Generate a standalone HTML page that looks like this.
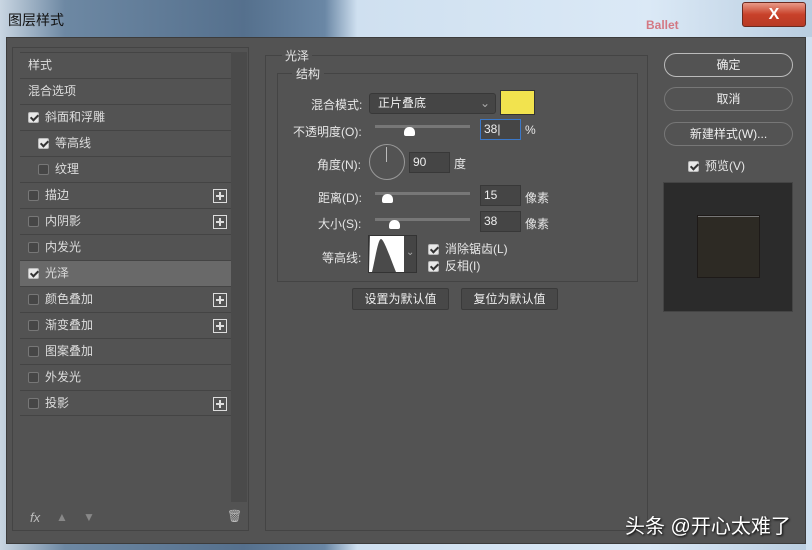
<!DOCTYPE html>
<html><head><meta charset="utf-8"><style>
*{margin:0;padding:0;box-sizing:border-box}
body{width:812px;height:550px;overflow:hidden;font-family:"Liberation Sans","Noto Sans CJK SC",sans-serif;font-size:12px;color:#e6e6e6;position:relative;background:#6f8aa6}
.a{position:absolute}
#title{left:0;top:0;width:812px;height:550px;background:linear-gradient(90deg,#c9d6e2 0%,#6d88a3 8%,#55708d 30%,#6a87a5 40%,#cfe0f0 44%,#dbe9f6 80%,#b9cde0 100%)}
#dlg{left:6px;top:37px;width:800px;height:507px;background:#535353;border:1px solid #3c3c3c}
.t{position:absolute;white-space:nowrap}
.row{position:absolute;left:20px;width:211px;height:26px;border-top:1px solid #444;line-height:25px;padding-left:8px;color:#ddd;font-size:12px}
.cb{display:inline-block;width:11px;height:11px;border:1px solid #777;border-radius:2px;background:#464646;vertical-align:-2px;margin-right:6px}
.cb.on{background:#e8e8e8;border-color:#bbb;position:relative}
.cb.on:after{content:"";position:absolute;left:3px;top:0px;width:3px;height:6px;border:solid #333;border-width:0 2px 2px 0;transform:rotate(45deg)}
.plus{position:absolute;right:4px;top:6px;width:14px;height:14px;border:1px solid #ddd}
.plus:before{content:"";position:absolute;left:2px;top:5px;width:8px;height:2px;background:#ddd}
.plus:after{content:"";position:absolute;left:5px;top:2px;width:2px;height:8px;background:#ddd}
.inp{position:absolute;background:#454545;border:1px solid #383838;height:21px;line-height:19px;padding-left:3px;color:#eee}
.track{position:absolute;height:3px;background:#777;width:95px;left:375px}
.thumb{position:absolute;width:11px;height:9px;background:#fff;border-radius:5px 5px 2px 2px}
.btn{position:absolute;border:1px solid #777;border-radius:12px;text-align:center;color:#eee;height:24px;line-height:22px}
.sb{position:absolute;background:#484848;border:1px solid #3a3a3a;height:22px;line-height:20px;text-align:center;color:#eee;border-radius:2px}
</style></head><body>
<div class="a" id="title"></div>
<div class="t" style="left:8px;top:10px;font-size:14px;color:#111">图层样式</div>
<div class="a" style="left:646px;top:18px;color:#d24a55;font-weight:bold;font-size:12px;opacity:.7">Ballet</div>
<div class="a" style="left:742px;top:2px;width:64px;height:25px;background:linear-gradient(#e89a88,#c8412a 50%,#b83a25);border:1px solid #6b2a20;border-radius:3px;color:#fff;font-weight:bold;font-size:16px;text-align:center;line-height:23px">X</div>
<div class="a" id="dlg"></div>
<div class="a" style="left:12px;top:47px;width:237px;height:484px;border:1px solid #444"></div>
<div class="a" style="left:231px;top:52px;width:16px;height:450px;background:#4a4a4a"></div>
<div class="row" style="top:52px">样式</div>
<div class="row" style="top:78px">混合选项</div>
<div class="row" style="top:104px"><span class="cb on"></span>斜面和浮雕</div>
<div class="row" style="top:130px;padding-left:18px"><span class="cb on"></span>等高线</div>
<div class="row" style="top:156px;padding-left:18px"><span class="cb"></span>纹理</div>
<div class="row" style="top:182px"><span class="cb"></span>描边<span class="plus"></span></div>
<div class="row" style="top:208px"><span class="cb"></span>内阴影<span class="plus"></span></div>
<div class="row" style="top:234px"><span class="cb"></span>内发光</div>
<div class="row" style="top:260px;background:#696969"><span class="cb on"></span>光泽</div>
<div class="row" style="top:286px"><span class="cb"></span>颜色叠加<span class="plus"></span></div>
<div class="row" style="top:312px"><span class="cb"></span>渐变叠加<span class="plus"></span></div>
<div class="row" style="top:338px"><span class="cb"></span>图案叠加</div>
<div class="row" style="top:364px"><span class="cb"></span>外发光</div>
<div class="row" style="top:390px;border-bottom:1px solid #444"><span class="cb"></span>投影<span class="plus"></span></div>
<div class="t" style="left:30px;top:510px;font-style:italic;color:#bbb;font-size:13px">fx</div>
<div class="t" style="left:56px;top:510px;color:#888">▲</div>
<div class="t" style="left:83px;top:510px;color:#888">▼</div>
<div class="t" style="left:227px;top:509px;color:#bbb">🗑</div>
<div class="a" style="left:265px;top:55px;width:383px;height:476px;border:1px solid #444"></div>
<div class="t" style="left:282px;top:47px;background:#535353;padding:0 3px">光泽</div>
<div class="a" style="left:277px;top:73px;width:361px;height:209px;border:1px solid #444"></div>
<div class="t" style="left:292px;top:65px;background:#535353;padding:0 4px">结构</div>
<div class="t" style="left:311px;top:96px">混合模式:</div>
<div class="inp" style="left:369px;top:93px;width:127px;border-radius:3px;padding-left:8px">正片叠底<span style="position:absolute;right:5px;color:#aaa">⌄</span></div>
<div class="a" style="left:500px;top:90px;width:35px;height:25px;background:#f2e34e;border:1px solid #333"></div>
<div class="t" style="left:293px;top:123px">不透明度(O):</div>
<div class="track" style="top:125px"></div><div class="thumb" style="left:404px;top:127px"></div>
<div class="inp" style="left:480px;top:119px;width:41px;border-color:#3b78c8">38|</div>
<div class="t" style="left:525px;top:123px">%</div>
<div class="t" style="left:317px;top:156px">角度(N):</div>
<div class="a" style="left:369px;top:144px;width:36px;height:36px;border:1px solid #999;border-radius:50%"></div>
<div class="a" style="left:386px;top:147px;width:1px;height:15px;background:#bbb"></div>
<div class="inp" style="left:409px;top:152px;width:41px">90</div>
<div class="t" style="left:454px;top:155px">度</div>
<div class="t" style="left:318px;top:189px">距离(D):</div>
<div class="track" style="top:192px"></div><div class="thumb" style="left:382px;top:194px"></div>
<div class="inp" style="left:480px;top:185px;width:41px">15</div>
<div class="t" style="left:525px;top:189px">像素</div>
<div class="t" style="left:318px;top:215px">大小(S):</div>
<div class="track" style="top:218px"></div><div class="thumb" style="left:389px;top:220px"></div>
<div class="inp" style="left:480px;top:211px;width:41px">38</div>
<div class="t" style="left:525px;top:215px">像素</div>
<div class="t" style="left:322px;top:249px">等高线:</div>
<div class="a" style="left:368px;top:235px;width:49px;height:38px;border:1px solid #333;background:#454545">
<svg width="35" height="36" style="position:absolute;left:0;top:0;background:#fff"><path d="M0 0 L1 0 L1 36 Z" fill="#4a4a4a"/><path d="M3 36 C6 24 9 3 12 3 C15 3 22 24 27 36 Z" fill="#4a4a4a"/></svg>
<span style="position:absolute;left:37px;top:11px;color:#aaa;font-size:10px">⌄</span></div>
<div class="t" style="left:428px;top:240px"><span class="cb on"></span>消除锯齿(L)</div>
<div class="t" style="left:428px;top:257px"><span class="cb on"></span>反相(I)</div>
<div class="sb" style="left:352px;top:288px;width:97px">设置为默认值</div>
<div class="sb" style="left:461px;top:288px;width:97px">复位为默认值</div>
<div class="btn" style="left:664px;top:53px;width:129px;border-color:#bbb">确定</div>
<div class="btn" style="left:664px;top:87px;width:129px">取消</div>
<div class="btn" style="left:664px;top:122px;width:129px">新建样式(W)...</div>
<div class="t" style="left:688px;top:157px"><span class="cb on"></span>预览(V)</div>
<div class="a" style="left:663px;top:182px;width:130px;height:130px;background:#2b2b2b;border:1px solid #444"></div>
<div class="a" style="left:697px;top:215px;width:63px;height:63px;background:#2d2a24;border:1px solid #1e1a18;box-shadow:inset 0 1px 0 #777"></div>
<div class="a" style="left:806px;top:37px;width:6px;height:513px;background:#cfe0f0"></div>
<div class="t" style="left:625px;top:510px;font-size:20px;color:#fff;text-shadow:1px 1px 2px #000">头条 @开心太难了</div>
</body></html>
